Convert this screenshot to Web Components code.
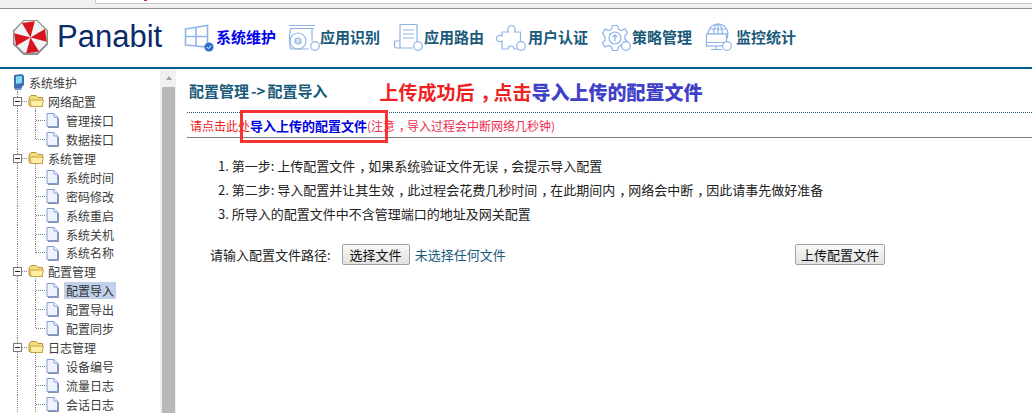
<!DOCTYPE html>
<html lang="zh">
<head>
<meta charset="utf-8">
<title>Panabit</title>
<style>
  html, body { margin: 0; height: 100%; background: #fff; overflow: hidden; }
  body { font-family: "Noto Sans CJK SC", "Liberation Sans", sans-serif; }
</style>
</head>
<body>
<pb-chrome></pb-chrome>
<pb-header>
  <pb-nav-item icon="windows" active>系统维护</pb-nav-item>
  <pb-nav-item icon="projector">应用识别</pb-nav-item>
  <pb-nav-item icon="doc">应用路由</pb-nav-item>
  <pb-nav-item icon="puzzle">用户认证</pb-nav-item>
  <pb-nav-item icon="gear">策略管理</pb-nav-item>
  <pb-nav-item icon="globe">监控统计</pb-nav-item>
</pb-header>
<pb-layout>
  <pb-tree slot="side">
    <pb-row kind="root" first>系统维护</pb-row>
    <pb-row kind="folder">网络配置</pb-row>
    <pb-row kind="leaf">管理接口</pb-row>
    <pb-row kind="leaf" last>数据接口</pb-row>
    <pb-row kind="folder">系统管理</pb-row>
    <pb-row kind="leaf">系统时间</pb-row>
    <pb-row kind="leaf">密码修改</pb-row>
    <pb-row kind="leaf">系统重启</pb-row>
    <pb-row kind="leaf">系统关机</pb-row>
    <pb-row kind="leaf" last>系统名称</pb-row>
    <pb-row kind="folder">配置管理</pb-row>
    <pb-row kind="leaf" selected>配置导入</pb-row>
    <pb-row kind="leaf">配置导出</pb-row>
    <pb-row kind="leaf" last>配置同步</pb-row>
    <pb-row kind="folder">日志管理</pb-row>
    <pb-row kind="leaf">设备编号</pb-row>
    <pb-row kind="leaf">流量日志</pb-row>
    <pb-row kind="leaf">会话日志</pb-row>
  </pb-tree>
  <pb-import-page slot="main"></pb-import-page>
</pb-layout>

<script>
(function () {
  /* Nav icons, drawn in a 33x34 box that ends where the label starts. */
  const ICONS = {
    windows: `<path d="M2.5 8 L24.5 4.5 V26 L2.5 24 Z M2.5 15.5 H24.5 M13 6.5 V25" stroke-width="1.6"/>
      <circle cx="26" cy="26" r="4.6" fill="#2f6fd0" stroke="none"/>
      <path d="M23.8 26 l1.6 1.6 l2.8 -3" stroke="#fff" stroke-width="1"/>`,
    projector: `<path d="M2 4.5 H28 M3 7.5 H27 M4 7.5 C2 12 2 24 4 28 H22 M25 8 V20"/>
      <circle cx="11" cy="20" r="8"/><circle cx="11" cy="20" r="3" fill="#cfdff5"/>
      <circle cx="28" cy="25" r="4.3" fill="#fff"/>`,
    doc: `<path d="M9 3.5 H26 V21 M9 3.5 V27 H22 M3.5 20 V25 C3.5 27 5 27 9 27 M3.5 20 H9 M12 9 H23 M12 13 H23 M12 17 H23"/>
      <circle cx="27" cy="25" r="4.3" fill="#fff"/>`,
    puzzle: `<path d="M7 11 H13.5 C12 8 13.5 4.5 16.5 4.5 C19.5 4.5 21 8 19.5 11 H25.5 V20 M7 11 V15 C4 13.5 1.5 15 1.5 17.5 C1.5 20 4 21.5 7 20 V28 H13 C13 24 19 24 19 28 H22"/>
      <circle cx="26" cy="25" r="4.3" fill="#fff"/>`,
    gear: `<path d="M13.5 4.5 H18.5 L19.5 8 L22.5 9.5 L26 7.8 L28.5 11.8 L26 14.5 V18.5 L28.5 20.5 L24 25 L22 24 L19.5 26 L18.5 29.5 H13.5 L12.5 26 L9.5 24.5 L6 26 L3.5 22 L6 19.5 V15.5 L3.5 12.5 L6 8 L9.5 9.5 L12.5 8 Z"/>
      <circle cx="16" cy="17" r="6"/><path d="M16 20.5 V14 M13.8 16 L16 13.8 L18.2 16"/>
      <circle cx="27" cy="25" r="4.3" fill="#fff"/>`,
    globe: `<circle cx="15" cy="13" r="10"/><ellipse cx="15" cy="13" rx="4.5" ry="10"/>
      <path d="M5 13 H25 M6.5 8 H23.5 M15 3 V13"/>
      <rect x="3.5" y="13" width="20" height="12" fill="#fff"/>
      <path d="M3.5 21.5 H23.5 M13 25 V28 M8 28.5 H19"/>
      <circle cx="24" cy="25" r="4.3" fill="#fff"/>`,
  };

  function define(name, css, html, extra) {
    if (customElements.get(name)) return;
    const tpl = document.createElement("template");
    tpl.innerHTML = `<style>${css}</style>${html}`;
    class El extends HTMLElement {
      constructor() {
        super();
        this.attachShadow({ mode: "open" }).appendChild(tpl.content.cloneNode(true));
      }
      connectedCallback() { if (extra) extra.call(this); }
    }
    customElements.define(name, El);
  }

  /* The reference's full-width comma sits mid-cell, SC puts it at the left. */
  const commas = (s) => s.replace(/，/g, '<i class="c">，</i>');

  /* Sliver of the browser window above the page. */
  define("pb-chrome", `
    :host { display: block; height: 8px; background: #f0f0f0; border-bottom: 1px solid #8c8c8c; }
    .bar { margin-left: 95px; height: 3px; background: #fff;
      border-left: 1px solid #c8c8c8; border-bottom: 1px solid #c8c8c8; }
    .mark { display: block; margin-left: 48px; width: 3px; height: 1px; background: #b03a30; }
  `, `<div class="bar"><span class="mark"></span></div>`);

  define("pb-header", `
    :host { display: flex; align-items: center; height: 58px; background: #fff;
      border-bottom: 2px solid #005f92; }
    .logo { display: flex; align-items: center; width: 183px; box-sizing: border-box; padding-left: 12px; gap: 8px; }
    .logo svg { display: block; margin-top: -1px; }
    .word { font: 31px/36px "Liberation Sans", Arial, sans-serif; color: #0b2a68; margin-top: -2px; }
    nav { display: flex; }
  `, `
    <div class="logo">
      <svg width="37" height="37" viewBox="-18.5 -18.5 37 37" aria-hidden="true">
        <polygon points="-7,-17.5 7,-17.5 17.5,-7 17.5,7 7,17.5 -7,17.5 -17.5,7 -17.5,-7" fill="#8e8e8e"/>
        <polygon points="-6.5,-16.5 6.5,-16.5 16,-6.5 16,6 6.5,15 -6.5,15 -16,6 -16,-6.5" fill="#f4f4f4"/>
        <g fill="#d8141f" transform="rotate(-8)">
          <polygon points="0,0 -6.5,-15.5 6.5,-15.5"/>
          <polygon points="0,0 15.5,-6.5 15.5,6.5"/>
          <polygon points="0,0 6.5,15 -6.5,15"/>
          <polygon points="0,0 -15.5,6.5 -15.5,-6.5"/>
        </g>
      </svg>
      <span class="word">Panabit</span>
    </div>
    <nav><slot></slot></nav>`);

  define("pb-nav-item", `
    :host { display: flex; align-items: center; width: 104px; height: 34px;
      font-size: 15px; font-weight: 700; color: #1a5a7a; }
    :host([active]) { color: #0000ee; }
    svg { flex: none; display: block; fill: none; stroke: #8fb4e8; stroke-width: 1.2; }
    .label { white-space: nowrap; margin-top: -3px; }
  `, `<svg width="33" height="34" viewBox="0 0 33 34" aria-hidden="true"></svg><span class="label"><slot></slot></span>`,
    function () {
      this.shadowRoot.querySelector("svg").innerHTML = ICONS[this.getAttribute("icon")] || "";
    });

  define("pb-layout", `
    :host { display: flex; height: 344px; overflow: hidden; }
    .side { flex: none; width: 160px; overflow: hidden; }
    .bar { flex: none; width: 16px; box-sizing: border-box; background: #f0f0f0;
      padding: 7px 1px 0 2px; display: flex; flex-direction: column; }
    .up { width: 0; height: 0; margin: 0 auto 7px; border: 3.5px solid transparent;
      border-top: 0; border-bottom: 4px solid #a0a0a0; }
    .thumb { flex: 1; background: #b8b8b8; }
    .main { flex: 1; min-width: 0; overflow: hidden; }
  `, `
    <div class="side"><slot name="side"></slot></div>
    <div class="bar"><div class="up"></div><div class="thumb"></div></div>
    <div class="main"><slot name="main"></slot></div>`);

  define("pb-tree", `
    :host { display: block; padding-top: 4.5px; font-size: 12px; color: #3c3c3c; }
  `, `<slot></slot>`);

  const DOT_V = "repeating-linear-gradient(to bottom,#808080 0 1px,transparent 1px 2px)";
  const DOT_H = "repeating-linear-gradient(to right,#808080 0 1px,transparent 1px 2px)";

  /* One tree line: dotted guides, expander/folder/page icon, label. */
  define("pb-row", `
    :host { display: flex; align-items: center; height: 18.9px; white-space: nowrap; }
    .guides { flex: none; position: relative; height: 100%; background-repeat: no-repeat; }
    :host([kind=root]) .guides { width: 29px;
      background-image: ${DOT_V}; background-size: 1px 50%; background-position: 17px 100%; }
    :host([kind=folder]) .guides { width: 48px;
      background-image: ${DOT_V}, ${DOT_H}, ${DOT_V};
      background-size: 1px 100%, 10px 1px, 1px 50%;
      background-position: 17px 0, 18px 50%, 35px 100%; }
    :host([kind=leaf]) .guides { width: 66px;
      background-image: ${DOT_V}, ${DOT_V}, ${DOT_H};
      background-size: 1px 100%, 1px 100%, 9px 1px;
      background-position: 17px 0, 35px 0, 36px 50%; }
    :host([kind=leaf][last]) .guides { background-size: 1px 100%, 1px 50%, 9px 1px;
      background-position: 17px 0, 35px 0, 36px 50%; }
    svg { position: absolute; display: block; }
    .label { padding: 0 2px; margin-left: -2px; line-height: 17px; height: 17px; }
    :host([selected]) .label { background: #c0d0ea; color: #333; }
  `, `<span class="guides"></span><span class="label"><slot></slot></span>`,
    function () {
      const kind = this.getAttribute("kind");
      const g = this.shadowRoot.querySelector(".guides");
      if (kind === "root") {
        g.innerHTML = `<svg style="left:12px;top:0" width="14" height="17" viewBox="0 0 14 17" aria-hidden="true">
          <path d="M2 1 L10 0 L12 2 V11 L10 13 L9 16 H3 L2 13 Z" fill="#3f6db5"/>
          <path d="M4 2.5 L10 2 V9 L4 10 Z" fill="#7fdcf0"/><path d="M3 14 H9 V16 H3 Z" fill="#6f8fc4"/></svg>`;
      } else if (kind === "folder") {
        g.innerHTML = `<svg style="left:13px;top:5px" width="9" height="9" viewBox="0 0 9 9" aria-hidden="true">
            <rect x=".5" y=".5" width="8" height="8" fill="#fff" stroke="#7a7a7a"/><path d="M2 4.5 H7" stroke="#222"/></svg>
          <svg style="left:28px;top:2px" width="17" height="14" viewBox="0 0 17 14" aria-hidden="true">
            <path d="M1 4 L3 1.5 H8 L10 3.5 H14.5 V12.5 H2.5 L1 11 Z" fill="#f6de7c" stroke="#b8923a"/>
            <path d="M2 6 H15.5 L14 12.5 H3 Z" fill="#ffefa6" stroke="#c9a445"/></svg>`;
      } else {
        g.innerHTML = `<svg style="left:46px;top:2px" width="13" height="15" viewBox="0 0 13 15" aria-hidden="true">
          <path d="M1 .5 H8 L11.5 4 V13.5 H1 Z" fill="#eef3fd" stroke="#7f9bd8"/>
          <path d="M8 .5 V4 H11.5" fill="#fff" stroke="#7f9bd8"/>
          <path d="M2 14.5 H12.5 V5" fill="none" stroke="#8a8fa8"/></svg>`;
      }
    });

  define("pb-import-page", `
    :host { display: block; height: 100%; padding-left: 11px; background: #fff; color: #222; }
    .head { display: flex; align-items: center; height: 44px; padding-left: 2px; gap: 52px;
      border-bottom: 1px dotted #1a5a7a; box-sizing: border-box; }
    .crumb { font-size: 15px; font-weight: 700; color: #1a5a7a; white-space: nowrap; }
    .crumb span { padding: 0 2px; }
    .note { font-size: 19px; font-weight: 700; color: #ee2222; white-space: nowrap; margin-top: 2px; }
    .note b { color: #4040c8; }
    .c { font-style: normal; padding-left: .3em; letter-spacing: -.3em; }
    .notice { position: relative; display: flex; align-items: center; height: 25px; padding-left: 3px;
      border-bottom: 1px solid #808080; box-sizing: border-box; font-size: 12px; color: #f02020; white-space: nowrap; }
    .notice a { font-size: 13px; font-weight: 700; color: #0000e0; }
    .notice span { color: #f02c50; }
    .box { position: absolute; left: 53px; top: -3px; width: 148px; height: 33px; box-sizing: border-box;
      border: 3px solid #f43333; pointer-events: none; }
    ol { list-style: none; margin: 16px 0 0; padding: 0 0 0 31px; font-size: 13px; line-height: 24px; }
    .form { display: flex; align-items: center; width: 675px; height: 21px; margin: 18px 0 0 23px;
      font-size: 13px; white-space: nowrap; }
    .none { margin-left: 5px; color: #1a5a7a; }
    button { font: inherit; color: #111; height: 21px; padding: 0; border: 1px solid #a3a3a3; border-radius: 2px;
      background: linear-gradient(#f8f8f8, #e2e2e2); box-sizing: border-box; }
    .pick { width: 68px; margin-left: 11px; }
    .send { width: 90px; margin-left: auto; }
  `, commas(`
    <div class="head">
      <span class="crumb">配置管理<span>-&gt;</span>配置导入</span>
      <span class="note">上传成功后，点击<b>导入上传的配置文件</b></span>
    </div>
    <div class="notice">请点击此处<a>导入上传的配置文件</a><span>(注意，导入过程会中断网络几秒钟)</span><i class="box"></i></div>
    <ol>
      <li>1. 第一步: 上传配置文件，如果系统验证文件无误，会提示导入配置</li>
      <li>2. 第二步: 导入配置并让其生效，此过程会花费几秒时间，在此期间内，网络会中断，因此请事先做好准备</li>
      <li>3. 所导入的配置文件中不含管理端口的地址及网关配置</li>
    </ol>
    <div class="form">
      <span>请输入配置文件路径:</span>
      <button class="pick" type="button">选择文件</button>
      <span class="none">未选择任何文件</span>
      <button class="send" type="button">上传配置文件</button>
    </div>`));
})();
</script>
</body>
</html>
